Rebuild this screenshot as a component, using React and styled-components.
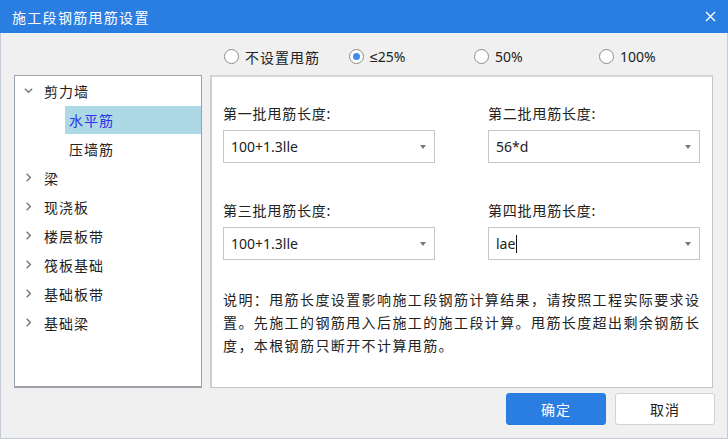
import React from "react"
import styled, { createGlobalStyle } from "styled-components"

const GlobalStyle = createGlobalStyle`
  html, body {
    margin: 0;
    padding: 0;
    background: #f0f0f0;
  }
  body {
    font-family: "Noto Sans", "Liberation Sans", "Noto Sans CJK SC", sans-serif;
    color: #222;
  }
`

const Window = styled.div`
  width: 728px;
  height: 439px;
  box-sizing: border-box;
  border: 1px solid #c3cbd6;
  border-top: none;
  background: #f0f0f0;
  display: flex;
  flex-direction: column;
`

const TitleBar = styled.div`
  height: 33px;
  margin: 0 -1px;
  background: #2a7de1;
  color: #fff;
  display: flex;
  align-items: center;
  justify-content: space-between;
  padding: 0 12px 0 12px;
  font-family: "Noto Sans CJK SC", sans-serif;
  font-size: 14px;
  letter-spacing: 1.3px;
`

const CloseButton = styled.span`
  display: flex;
  align-items: center;
`

const Body = styled.div`
  flex: 1;
  padding: 0 13px 0 13px;
  display: flex;
  flex-direction: column;
`

const RadioRow = styled.div`
  height: 42px;
  display: grid;
  grid-template-columns: repeat(4, 125px);
  align-items: center;
  padding-left: 210px;
  padding-top: 5px;
  box-sizing: border-box;
`

const RadioItem = styled.label`
  display: flex;
  align-items: center;
  gap: 6px;
  font-size: 14px;
  letter-spacing: ${(p) => (p.$cjk ? "1px" : "0")};
  font-family: ${(p) =>
    p.$cjk
      ? `"Noto Sans CJK SC", sans-serif`
      : `"Noto Sans", "Liberation Sans", "Noto Sans CJK SC", sans-serif`};
  color: #222;
`

const RadioCircle = styled.span`
  width: 15px;
  height: 15px;
  box-sizing: border-box;
  border-radius: 50%;
  border: 1px solid #8c8c8c;
  background: #fff;
  display: flex;
  align-items: center;
  justify-content: center;
  flex-shrink: 0;

  &::after {
    content: "";
    width: 7px;
    height: 7px;
    border-radius: 50%;
    background: ${(p) => (p.$checked ? "#3b8ef0" : "transparent")};
  }
`

const Main = styled.div`
  display: flex;
  gap: 8px;
  height: 313px;
  margin-right: 1px;
`

const Tree = styled.ul`
  width: 188px;
  box-sizing: border-box;
  margin: 0;
  padding: 0;
  list-style: none;
  background: #fff;
  border: 1px solid #9ea3aa;
  border-bottom-width: 2px;
`

const TreeRow = styled.li`
  height: 29px;
  display: flex;
  align-items: center;
  font-family: "Noto Sans CJK SC", sans-serif;
  font-size: 14px;
  letter-spacing: 1px;
  padding-left: ${(p) => (p.$child ? "50px" : "7px")};
`

const Chevron = styled.span`
  width: 12px;
  display: flex;
  align-items: center;
  justify-content: center;
  margin-right: 10px;
  color: #7a7a7a;
`

const TreeLabel = styled.span`
  flex: 1;
  height: 28px;
  display: flex;
  align-items: center;
  padding-left: ${(p) => (p.$child ? "4px" : "0")};
  background: ${(p) => (p.$selected ? "#add8e6" : "transparent")};
  color: ${(p) => (p.$selected ? "#2b33e8" : "#222")};
`

const Panel = styled.div`
  flex: 1;
  box-sizing: border-box;
  background: #fff;
  border: 1px solid #c4c4c4;
  border-left: 2px solid #cfcfcf;
  border-top: 2px solid #d6d6d6;
  padding: 27px 0 0 11px;
  display: flex;
  flex-direction: column;
`

const FieldGrid = styled.div`
  display: grid;
  grid-template-columns: 212px 212px;
  column-gap: 53px;
  row-gap: 38px;
`

const Field = styled.div`
  display: flex;
  flex-direction: column;
  gap: 8px;
`

const FieldLabel = styled.div`
  font-family: "Noto Sans CJK SC", sans-serif;
  font-size: 14px;
  letter-spacing: 0.8px;
  line-height: 18px;
  color: #222;
`

const Select = styled.div`
  height: 33px;
  box-sizing: border-box;
  border: 1px solid #c6c6c6;
  background: #fff;
  display: flex;
  align-items: center;
  padding: 0 8px 0 7px;
  font-size: 14px;
  color: #222;
`

const SelectValue = styled.span`
  flex: 1;
  display: flex;
  align-items: center;
`

const Caret = styled.span`
  width: 1px;
  height: 18px;
  background: #111;
  margin-left: 1px;
`

const Arrow = styled.span`
  width: 0;
  height: 0;
  border-left: 3.5px solid transparent;
  border-right: 3.5px solid transparent;
  border-top: 4px solid #777;
`

const Note = styled.p`
  margin: 28px 0 0 0;
  width: 480px;
  font-family: "Noto Sans CJK SC", sans-serif;
  font-size: 14px;
  letter-spacing: 1.4px;
  line-height: 23px;
  text-spacing-trim: space-all;
  color: #222;
`

const ButtonRow = styled.div`
  display: flex;
  justify-content: flex-end;
  gap: 9px;
  padding-top: 5px;
  margin-right: -1px;
`

const Button = styled.button`
  width: 100px;
  height: 32px;
  border-radius: 3px;
  font-family: "Noto Sans CJK SC", sans-serif;
  font-size: 14px;
  letter-spacing: 1px;
  cursor: pointer;
  border: 1px solid ${(p) => (p.$primary ? "#2a7de1" : "#d2d2d2")};
  background: ${(p) => (p.$primary ? "#2a7de1" : "#fff")};
  color: ${(p) => (p.$primary ? "#fff" : "#222")};
`

const ChevronIcon = ({ open }) => (
  <svg width="11" height="11" viewBox="0 0 12 12">
    <path
      d={open ? "M2 4 L6 8 L10 4" : "M4 2 L8 6 L4 10"}
      fill="none"
      stroke="currentColor"
      strokeWidth="1.6"
    />
  </svg>
)

const radios = [
  { label: "不设置甩筋", cjk: true },
  { label: "≤25%", checked: true },
  { label: "50%" },
  { label: "100%" },
]

const treeItems = [
  { label: "剪力墙", open: true },
  { label: "水平筋", child: true, selected: true },
  { label: "压墙筋", child: true },
  { label: "梁" },
  { label: "现浇板" },
  { label: "楼层板带" },
  { label: "筏板基础" },
  { label: "基础板带" },
  { label: "基础梁" },
]

const fields = [
  { label: "第一批甩筋长度:", value: "100+1.3lle" },
  { label: "第二批甩筋长度:", value: "56*d" },
  { label: "第三批甩筋长度:", value: "100+1.3lle" },
  { label: "第四批甩筋长度:", value: "lae", focused: true },
]

const App = () => (
  <>
    <GlobalStyle />
    <Window>
      <TitleBar>
        <span>施工段钢筋甩筋设置</span>
        <CloseButton>
          <svg width="11" height="11" viewBox="0 0 11 11">
            <path d="M1 1 L10 10 M10 1 L1 10" stroke="#fff" strokeWidth="1.4" />
          </svg>
        </CloseButton>
      </TitleBar>
      <Body>
        <RadioRow>
          {radios.map((r) => (
            <RadioItem key={r.label} $cjk={r.cjk}>
              <RadioCircle $checked={r.checked} />
              {r.label}
            </RadioItem>
          ))}
        </RadioRow>
        <Main>
          <Tree>
            {treeItems.map((item) => (
              <TreeRow key={item.label} $child={item.child}>
                {!item.child && (
                  <Chevron>
                    <ChevronIcon open={item.open} />
                  </Chevron>
                )}
                <TreeLabel $child={item.child} $selected={item.selected}>
                  {item.label}
                </TreeLabel>
              </TreeRow>
            ))}
          </Tree>
          <Panel>
            <FieldGrid>
              {fields.map((f) => (
                <Field key={f.label}>
                  <FieldLabel>{f.label}</FieldLabel>
                  <Select>
                    <SelectValue>
                      {f.value}
                      {f.focused && <Caret />}
                    </SelectValue>
                    <Arrow />
                  </Select>
                </Field>
              ))}
            </FieldGrid>
            <Note>
              说明：甩筋长度设置影响施工段钢筋计算结果，请按照工程实际要求设置。先施工的钢筋甩入后施工的施工段计算。甩筋长度超出剩余钢筋长度，本根钢筋只断开不计算甩筋。
            </Note>
          </Panel>
        </Main>
        <ButtonRow>
          <Button $primary>确定</Button>
          <Button>取消</Button>
        </ButtonRow>
      </Body>
    </Window>
  </>
)

export default App
